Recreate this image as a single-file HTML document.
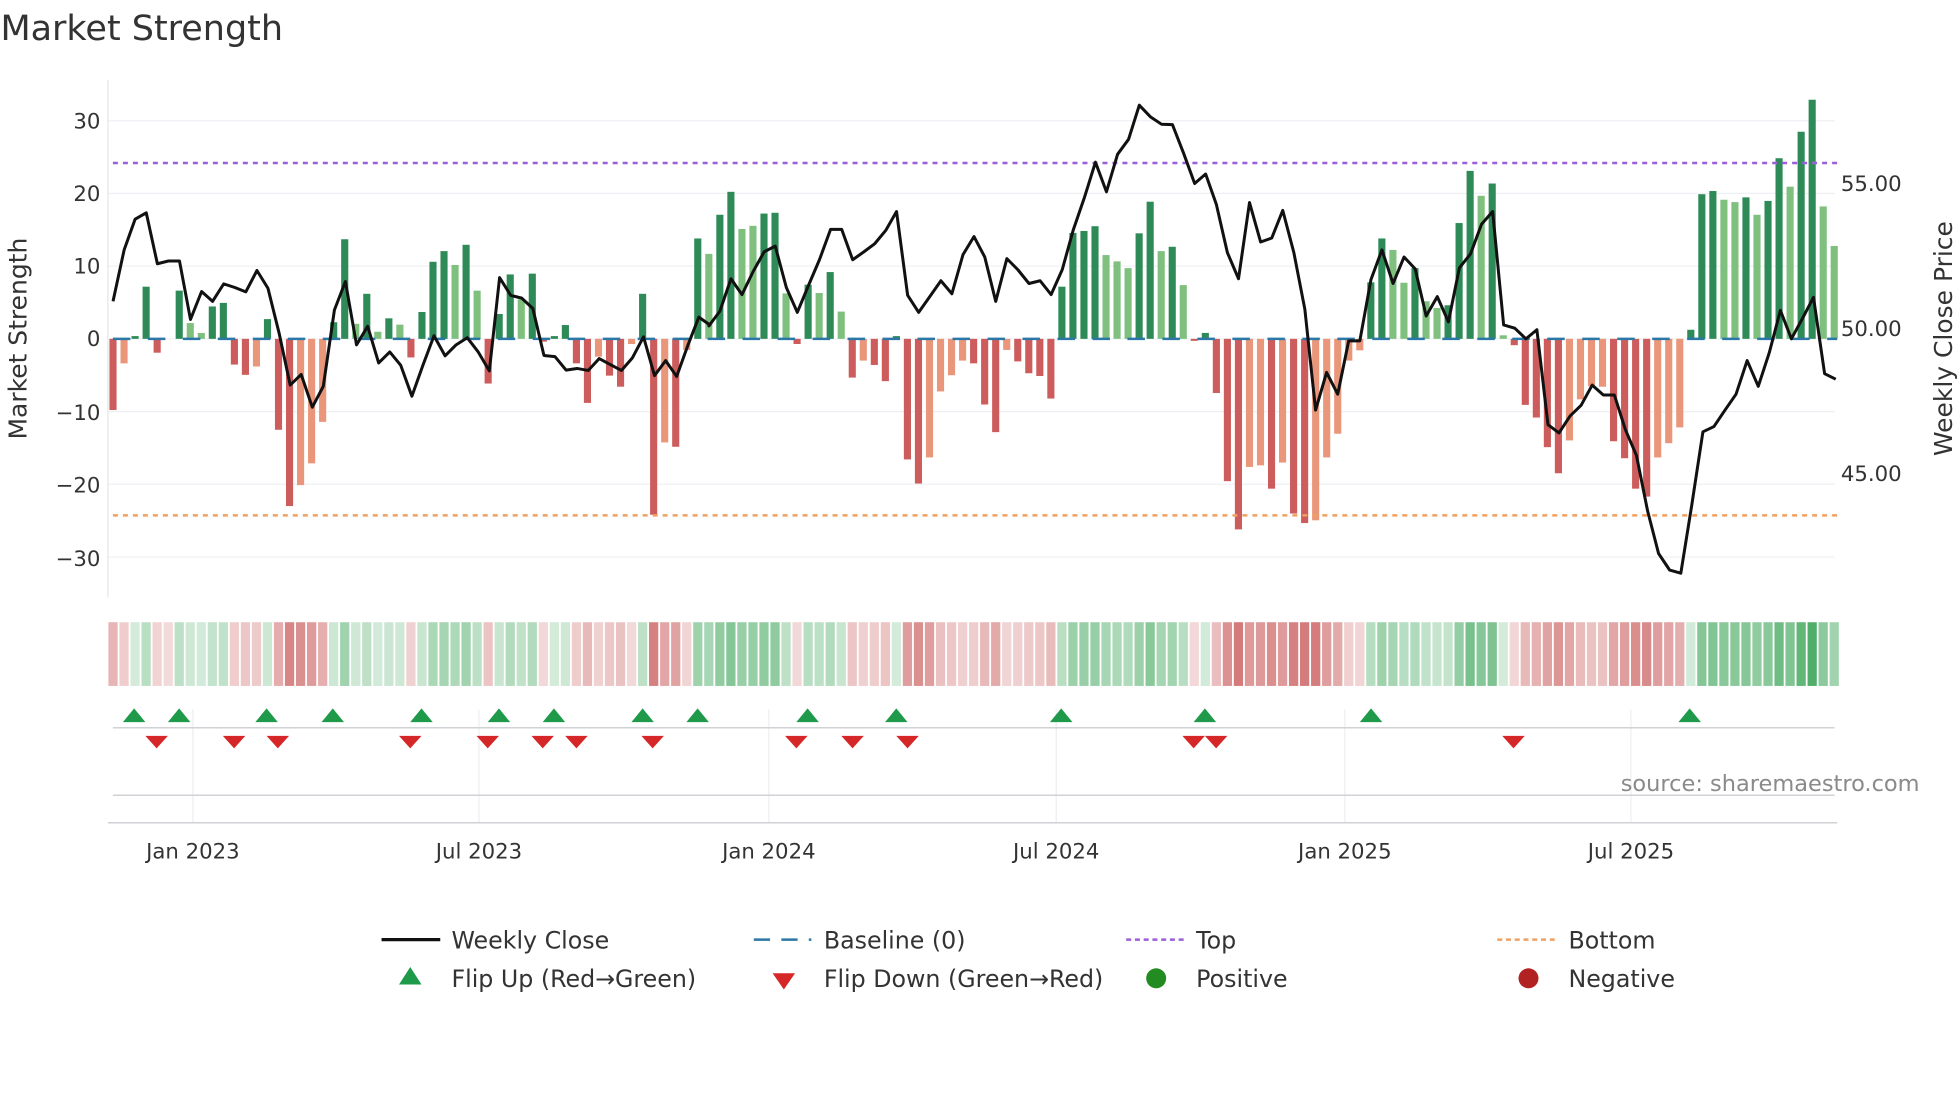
<!DOCTYPE html>
<html><head><meta charset="utf-8">
<style>
html,body{margin:0;padding:0;background:#fff;width:1960px;height:1102px;overflow:hidden}
svg{display:block}
text{font-family:"DejaVu Sans","Liberation Sans",sans-serif;fill:#333}
</style></head><body>
<svg id="s" width="1960" height="1102" viewBox="0 0 1568 882" xmlns="http://www.w3.org/2000/svg">
<text x="0" y="32" font-size="28" fill="#333">Market Strength</text>
<g id="grid"></g>
<line x1="86" y1="64" x2="86" y2="478" stroke="#e4e6ea" stroke-width="1"/>
<g id="bars"></g>
<line x1="90" y1="130.5" x2="1470" y2="130.5" stroke="#9b5fd9" stroke-width="2" stroke-dasharray="4,4"/>
<line x1="90" y1="412.5" x2="1470" y2="412.5" stroke="#f0a060" stroke-width="2" stroke-dasharray="4,4"/>
<line x1="90" y1="271.2" x2="1470" y2="271.2" stroke="#2a77a8" stroke-width="2" stroke-dasharray="14,14"/>
<polyline id="price" fill="none" stroke="#111" stroke-width="2.4" stroke-linejoin="round"/>
<g font-size="17" text-anchor="end">
<text x="80" y="103">30</text><text x="80" y="161">20</text><text x="80" y="219">10</text><text x="80" y="277">0</text>
<text x="80" y="336">−10</text><text x="80" y="394">−20</text><text x="80" y="453">−30</text>
</g>
<g font-size="17">
<text x="1473" y="153">55.00</text><text x="1473" y="269">50.00</text><text x="1473" y="385">45.00</text>
</g>
<text transform="translate(21,271) rotate(-90)" font-size="20" text-anchor="middle">Market Strength</text>
<text transform="translate(1562,271) rotate(-90)" font-size="20" text-anchor="middle">Weekly Close Price</text>
<g id="heat"></g>
<g stroke="#eceef2" stroke-width="1">
<line x1="154" y1="568" x2="154" y2="658"/><line x1="383" y1="568" x2="383" y2="658"/><line x1="615" y1="568" x2="615" y2="658"/>
<line x1="845" y1="568" x2="845" y2="658"/><line x1="1076" y1="568" x2="1076" y2="658"/><line x1="1305" y1="568" x2="1305" y2="658"/>
</g>
<line x1="90" y1="582.5" x2="1468" y2="582.5" stroke="#d0d2d6" stroke-width="1.2"/>
<line x1="90" y1="636.5" x2="1468" y2="636.5" stroke="#d0d2d6" stroke-width="1.2"/>
<line x1="86" y1="658.5" x2="1470" y2="658.5" stroke="#d0d2d6" stroke-width="1.2"/>
<g id="flips"></g>
<text x="1536" y="633" font-size="18" text-anchor="end" style="fill:#8a8a8a">source: sharemaestro.com</text>
<g font-size="17" text-anchor="middle">
<text x="154" y="687">Jan 2023</text><text x="383" y="687">Jul 2023</text><text x="615" y="687">Jan 2024</text>
<text x="845" y="687">Jul 2024</text><text x="1076" y="687">Jan 2025</text><text x="1305" y="687">Jul 2025</text>
</g>
<g font-size="19">
<line x1="305" y1="752" x2="352" y2="752" stroke="#111" stroke-width="2.6"/>
<text x="361" y="759">Weekly Close</text>
<line x1="603" y1="752" x2="649" y2="752" stroke="#2a77a8" stroke-width="2" stroke-dasharray="13,9"/>
<text x="659" y="759">Baseline (0)</text>
<line x1="901" y1="752" x2="947" y2="752" stroke="#9b5fd9" stroke-width="2" stroke-dasharray="4,3"/>
<text x="957" y="759">Top</text>
<line x1="1198" y1="752" x2="1244" y2="752" stroke="#f0a060" stroke-width="2" stroke-dasharray="4,3"/>
<text x="1255" y="759">Bottom</text>
<polygon points="328,774 319,788 337,788" fill="#1e9a4a"/>
<text x="361" y="790">Flip Up (Red→Green)</text>
<polygon points="618,779 636,779 627,792" fill="#d62728"/>
<text x="659" y="790">Flip Down (Green→Red)</text>
<circle cx="925" cy="783" r="8" fill="#228b22"/>
<text x="957" y="790">Positive</text>
<circle cx="1223" cy="783" r="8" fill="#b22222"/>
<text x="1255" y="790">Negative</text>
</g>
</svg>
<script>
(function(){
var NS="http://www.w3.org/2000/svg";
function el(t,a,p){var e=document.createElementNS(NS,t);for(var k in a)e.setAttribute(k,a[k]);document.getElementById(p).appendChild(e);return e;}
for(var v=-30;v<=30;v+=10){var y=271.2-v*5.82;el("line",{x1:86,x2:1468,y1:y,y2:y,stroke:"#eef0f4","stroke-width":1},"grid");}
var d="835R 717S 648D 523D 690R 655D 533D 615L 640L 573D 564D 720R 746R 725S 605D 885R 1078R 1025S 970S 865S 613D 403D 617L 541D 637L 603D 619L 702R 587D 460D 433D 468L 417D 533L 768R 592D 492D 555L 490D 662R 648D 620D 717R 817R 700S 748R 776R 668S 541D 1100R 917S 928R 683S 401D 440L 341D 283D 377L 369L 338D 336D 540L 668R 518D 539L 486D 586L 753R 710S 721R 762R 648D 960R 1021R 955S 788S 747S 710S 717R 821R 891R 683S 712R 742R 749R 806R 523D 387D 382D 370D 443L 459L 476L 388D 308D 433L 422D 519L 660R 640D 792R 1015R 1137R 979S 975S 1034R 968S 1097R 1121R 1114S 955S 895S 710S 684S 512D 401D 430L 513L 476D 560L 577L 570D 362D 230D 293L 262D 646L 671R 822R 854R 929R 995R 912S 808S 775S 776S 914R 957R 1034R 1054R 955S 919S 879S 632D 289D 281D 303L 309L 297D 341L 306D 198D 270L 131D 50D 320L 420L".split(" ");
var col={D:"#2e8b57",L:"#7fc07f",R:"#cd5c5c",S:"#e9967a"};
var sp=(1467.7-90.1)/156;
var vals=[];
for(var i=0;i<d.length;i++){
 var zy=parseFloat(d[i]),c=d[i].slice(-1);
 var y=64+zy/3.161,x=90.1+sp*i;
 var top=Math.min(y,271.2),h=Math.abs(y-271.2);
 if(h>0.3)el("rect",{x:x-2.85,y:top,width:5.7,height:h,fill:col[c]},"bars");
 vals.push((271.2-y)/5.82);
}
for(var i=0;i<vals.length;i++){
 var v=vals[i],x=90.1+sp*i;
 var a=Math.min(0.85,0.2+Math.abs(v)/30*0.6);
 var f=v>=0?"rgba(50,160,80,"+a.toFixed(2)+")":"rgba(195,70,70,"+a.toFixed(2)+")";
 el("rect",{x:x-3.7,y:498,width:7.4,height:51,fill:f},"heat");
}
var p1=[[32,560],[60,430],[88,352],[116,336],[144,465],[172,458],[200,458],[228,606],[256,535],[284,560],[312,516],[340,525],[368,536],[396,482],[424,527],[452,640],[480,772],[508,745],[536,828],[564,775],[592,582],[620,510],[648,670],[676,623],[704,716],[732,688],[760,722],[788,800],[816,722],[844,647],[872,698],[900,670],[928,652],[956,688],[984,736],[1010,500],[1038,545],[1066,552],[1094,578],[1122,697],[1150,700],[1178,734],[1206,730],[1234,735],[1262,705],[1290,720],[1318,735],[1346,703],[1374,650],[1402,748],[1430,710],[1458,750],[1486,672],[1514,600],[1542,620]];
var p2=[[22,622],[50,585],[78,503],[106,543],[134,485],[162,435],[190,420],[218,525],[246,588],[274,520],[302,455],[330,378],[358,378],[386,455],[414,435],[442,414],[470,380],[497,333],[525,545],[553,588],[581,548],[609,508],[637,541],[665,442],[693,396],[720,448],[748,560],[776,452],[804,480],[832,515],[860,508],[888,543],[916,480],[944,380],[972,298],[1000,208],[1028,283],[1056,188],[1084,150],[1111,64],[1139,93],[1167,112],[1195,113],[1223,185],[1251,262],[1279,238],[1306,315],[1334,437],[1362,503],[1390,310],[1418,410],[1446,400],[1474,330],[1502,437],[1530,580]];
var p3=[[0,535],[44,835],[75,740],[106,795],[137,660],[168,660],[199,505],[230,430],[261,515],[292,448],[323,478],[354,597],[385,548],[416,612],[447,475],[478,440],[509,365],[540,333],[571,620],[602,628],[633,655],[664,632],[695,872],[726,893],[757,850],[788,823],[819,772],[850,797],[881,797],[912,885],[943,950],[974,1090],[1005,1198],[1036,1240],[1067,1248],[1098,1075],[1129,890],[1160,877],[1191,835],[1222,795],[1253,710],[1284,775],[1315,690],[1346,583],[1377,655],[1408,603],[1439,550],[1470,743],[1501,757]];
var pts=[];
p1.forEach(function(q){pts.push((80+q[0]/3.161).toFixed(1)+","+(64+q[1]/3.161).toFixed(1));});
p2.forEach(function(q){pts.push((560+q[0]/3.161).toFixed(1)+","+(64+q[1]/3.161).toFixed(1));});
p3.forEach(function(q,k){if(k==0)return;pts.push((1040+q[0]/3.5).toFixed(1)+","+(64+q[1]/3.161).toFixed(1));});
document.getElementById("price").setAttribute("points",pts.join(" "));
[107,143,213,266,337,399,443,514,558,646,717,849,964,1097,1352].forEach(function(x){el("polygon",{points:x+",567 "+(x-9)+",578 "+(x+9)+",578",fill:"#1e9a4a"},"flips");});
[125,187,222,328,390,434,461,522,637,682,726,955,973,1211].forEach(function(x){el("polygon",{points:(x-9)+",589 "+(x+9)+",589 "+x+",599",fill:"#d62728"},"flips");});
})();
</script>
</body></html>
